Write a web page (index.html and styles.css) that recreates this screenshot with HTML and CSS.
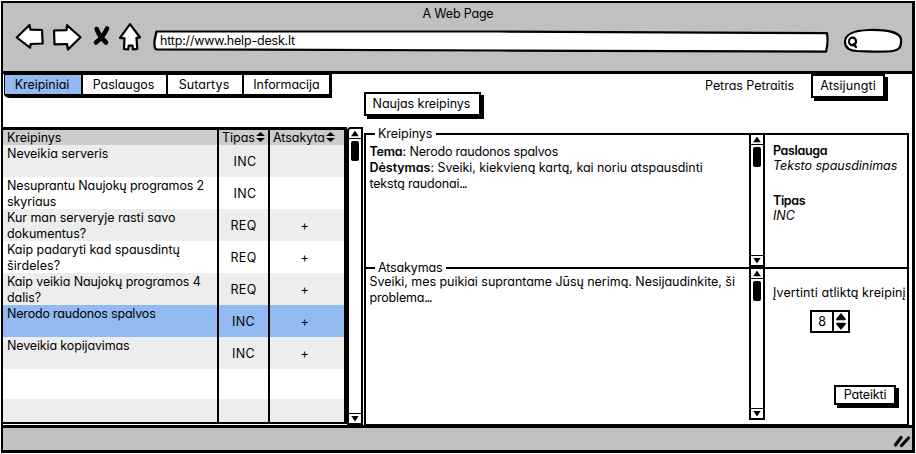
FILE: index.html
```
<!DOCTYPE html>
<html lang="lt">
<head>
<meta charset="utf-8">
<title>A Web Page</title>
<link rel="stylesheet" href="styles.css">
</head>
<body>
<svg class="defs" aria-hidden="true">
  <symbol id="sort" viewBox="0 0 9 10"><path d="M4.500 0 9 4H0zM0 6h9L4.500 10z"/></symbol>
  <symbol id="up" viewBox="0 0 8 6"><path d="M4 0 8 6H0z"/></symbol>
  <symbol id="down" viewBox="0 0 8 6"><path d="M0 0H8L4 6z"/></symbol>
</svg>
<div class="window">
  <header class="chrome">
    <h1 class="title n4">A Web Page</h1>
    <div class="toolbar">
      <svg class="nav" viewBox="15 22 128 32" aria-hidden="true">
        <path class="ink" d="M16.700 37.500 29.500 25l1 4.700 11.500.3.700 13.500-12 .5-.7 3.700zM54 30.500l12.500-.3.500-5 13.500 12L68 49.500l-1-5.500-12.500.3z"/>
        <path class="cross" d="M96.700 29Q98.500 35 106 42.500M107 28.500Q104 36 96 42.500"/>
        <path class="ink" d="M130 24.200 140 37.500l-3.500.3.800 11-4.300.7-.5-4-3.800.2-.5 3.600-4.200-.3.500-10.700-4.500-.5z"/>
      </svg>
      <div class="address">
        <svg class="shape" viewBox="153 29 677 24" aria-hidden="true"><path class="ink" d="M156.500 31.500 500 31.500 827 33.200q1.500 9-1 18.500L500 50.500 156 49.300q-2-2-1.500-8.500z"/></svg>
        <span class="url n4">http://www.help-desk.lt</span>
      </div>
      <svg class="search" viewBox="842 26 62 30" aria-hidden="true">
        <path class="ink" d="M845 42c0-8 8-11.500 24-12 18-.5 31 2.500 32 9 .8 9-2 12-14 12.500-12 .5-20-.3-30-.5-8-.5-12-4-12-9z"/>
        <path class="lens" d="M856 41.500a3.500 3.800 0 1 1-7 0 3.500 3.800 0 1 1 7 0zM853.500 44l2.500 3"/>
      </svg>
    </div>
  </header>

  <section class="topbar">
    <nav class="tabs">
      <a class="tab tab-a active">Kreipiniai</a>
      <a class="tab tab-b">Paslaugos</a>
      <a class="tab tab-c p1">Sutartys</a>
      <a class="tab tab-d">Informacija</a>
    </nav>
    <button class="btn new">Naujas kreipinys</button>
    <span class="user">Petras Petraitis</span>
    <button class="btn logout p1">Atsijungti</button>
  </section>

  <main class="main">
    <div class="list">
      <div class="row head">
        <div>Kreipinys</div>
        <div class="hc">Tipas<svg class="sort"><use href="#sort"/></svg></div>
        <div class="hc">Atsakyta<svg class="sort"><use href="#sort"/></svg></div>
      </div>
      <div class="row odd"><div>Neveikia serveris</div><div class="c">INC</div><div class="c"></div></div>
      <div class="row"><div><span class="n3">Nesuprantu Naujokų programos 2</span><br><span class="n2">skyriaus</span></div><div class="c">INC</div><div class="c"></div></div>
      <div class="row odd"><div>Kur man serveryje rasti savo<br>dokumentus?</div><div class="c req">REQ</div><div class="c">+</div></div>
      <div class="row"><div>Kaip padaryti kad spausdintų<br><span class="p1">širdeles?</span></div><div class="c req">REQ</div><div class="c">+</div></div>
      <div class="row odd"><div><span class="n2">Kaip veikia Naujokų programos 4</span><br>dalis?</div><div class="c req">REQ</div><div class="c">+</div></div>
      <div class="row selected"><div class="n4">Nerodo raudonos spalvos</div><div class="c inc">INC</div><div class="c">+</div></div>
      <div class="row odd"><div class="n3">Neveikia kopijavimas</div><div class="c inc">INC</div><div class="c">+</div></div>
      <div class="row short"><div></div><div></div><div></div></div>
      <div class="row odd last"><div></div><div></div><div></div></div>
    </div>
    <div class="scroll list-scroll">
      <svg class="cap"><use href="#up"/></svg><i class="thumb"></i><svg class="cap end"><use href="#down"/></svg>
    </div>

    <div class="panel">
      <section class="group request">
        <h2 class="legend">Kreipinys</h2>
        <div class="cols">
          <p class="text"><b class="n4">Tema</b>: <span class="n4">Nerodo raudonos spalvos</span><br><b>Dėstymas</b>: Sveiki, kiekvieną kartą, kai noriu atspausdinti<br><span class="n4">tekstą raudonai<span class="dots">...</span></span></p>
          <div class="scroll"><svg class="cap"><use href="#up"/></svg><i class="thumb"></i><svg class="cap end"><use href="#down"/></svg></div>
          <dl class="side">
            <dt>Paslauga</dt><dd>Teksto spausdinimas</dd>
            <dt>Tipas</dt><dd>INC</dd>
          </dl>
        </div>
      </section>
      <section class="group answer">
        <h2 class="legend n3">Atsakymas</h2>
        <div class="cols">
          <p class="text">Sveiki, mes puikiai suprantame Jūsų nerimą. Nesijaudinkite, ši<br><span class="n4">problema<span class="dots">...</span></span></p>
          <div class="scroll"><svg class="cap"><use href="#up"/></svg><i class="thumb"></i><svg class="cap end"><use href="#down"/></svg></div>
          <div class="rate">
            <span class="p1">Įvertinti atliktą kreipinį</span>
            <div class="spinner"><span>8</span><svg viewBox="0 0 10 15"><path d="M5 0 9.500 5.500 8.500 6.500h-7L.5 5.500zM1.500 8.500h7l1 1L5 15 .5 9.500z"/></svg></div>
            <button class="btn submit n3">Pateikti</button>
          </div>
        </div>
      </section>
    </div>
  </main>

  <footer class="status">
    <svg viewBox="0 0 18 15" aria-hidden="true"><path d="M2.500 12 8 4.500M8.500 12.500 15.500 5"/></svg>
  </footer>
</div>
</body>
</html>
```
FILE: styles.css
```
* { box-sizing: border-box; margin: 0; padding: 0; }

body {
  width: 916px;
  height: 454px;
  overflow: hidden;
  background: #fff;
  color: #000;
  font: 12.5px/16px Inter, "Open Sans", sans-serif;
  font-feature-settings: "cv11";
  letter-spacing: -0.04px;
  white-space: nowrap;
}

h1, h2, button { font: inherit; font-feature-settings: inherit; letter-spacing: -0.04px; }
b, dt { font-weight: 600; }
svg { display: block; flex: none; }
.defs { display: none; }

/* tracking steps */
.n2 { letter-spacing: -0.1px; }
.n3 { letter-spacing: -0.14px; }
.n4 { letter-spacing: -0.19px; }
.p1 { letter-spacing: 0.1px; }
.dots { letter-spacing: -1.2px; }

.window {
  display: flex;
  flex-direction: column;
  width: 914px;
  height: 452px;
  margin: 1px;
  border: solid #000;
  border-width: 2px 3px 3px 2px;
}

.chrome {
  height: 71px;
  flex: none;
  background: #c0c0c0;
  border-bottom: 3px solid #000;
}
.title { height: 19px; padding: 3px 0 0 1px; text-align: center; line-height: 16px; }
.toolbar { display: flex; align-items: flex-start; height: 34px; padding-left: 12px; }
.nav { width: 128px; height: 32px; }
.address { display: grid; width: 677px; height: 24px; margin: 7px 12px 0 10px; }
.address > * { grid-area: 1 / 1; }
.shape { width: 677px; height: 24px; }
.url { padding: 4px 0 0 7px; line-height: 16px; z-index: 1; }
.search { width: 62px; height: 30px; margin-top: 4px; }
.ink { fill: #fff; stroke: #000; stroke-width: 2.2; stroke-linejoin: round; }
.cross { fill: none; stroke: #000; stroke-width: 4.6; stroke-linecap: round; }
.lens { fill: none; stroke: #000; stroke-width: 2.2; stroke-linecap: round; }

.topbar { display: flex; align-items: flex-start; height: 53px; flex: none; }
.tabs {
  display: flex;
  width: 328px;
  height: 24px;
  margin-left: 1px;
  border: solid #000;
  border-width: 1px 3px 4px 1px;
  border-bottom-left-radius: 6px 4px;
}
.tab { height: 19px; padding: 2px 2px 0 0; text-align: center; border-right: 2px solid #000; }
.tab-a { width: 78px; }
.tab-b { width: 85px; }
.tab-c { width: 76px; }
.tab-d { flex: 1; border: 0; padding-right: 0; }
.active { background: #93b9f1; }

.btn {
  background: #fff;
  border: 2px solid #000;
  box-shadow: 3px 3px 0 #000;
  color: #000;
  text-align: center;
}
.new { width: 117px; height: 24px; margin: 18px 0 0 32px; padding-right: 2px; }
.user { margin: 4px 0 0 224px; width: 106px; }
.logout { width: 74px; height: 24px; padding-bottom: 1px; }

.main { display: flex; flex: 1; min-height: 0; }
.list { width: 344px; border: solid #000; border-width: 3px 3px 2px 0; height: 297px; }
.row { display: grid; grid-template-columns: 216px 51px 1fr; height: 32px; }
.row > div { padding: 1px 0 0 4px; border-right: 2px solid #000; }
.row > div:last-child { border-right: 0; }
.row > .c { display: flex; align-items: center; justify-content: center; padding: 1px 5px 0 0; }
.row > .c:nth-child(2) { padding: 1px 0 0 3px; letter-spacing: 0.3px; }
.row > .c.inc { padding-left: 0; }
.row > .c.req { padding-left: 0; }
.head { height: 15px; background: #ccc; }
.row.head > div { padding-top: 0; }
.row > .hc { display: flex; padding-left: 3px; }
.sort { width: 9px; height: 10px; margin: 2px 0 0 1px; }
.odd { background: #ededed; }
.selected { background: #93b9f1; }
.short { height: 30px; }
.last { height: 23px; }

.scroll {
  display: flex;
  flex-direction: column;
  align-items: center;
  width: 16px;
  border: 2px solid #000;
}
.cap { width: 12px; height: 10px; padding: 1.500px 1px; border-bottom: 1.500px solid #000; }
.cap.end { margin-top: auto; border-bottom: 0; border-top: 1.500px solid #000; }
.thumb { width: 8px; height: 20px; margin-top: 2px; background: #000; border-radius: 2px; }
.list-scroll { height: 298px; margin-right: 1px; border-top-left-radius: 4px; }

.panel { width: 545px; padding-top: 6px; }
.group { display: flow-root; height: 134px; border: solid #000; border-width: 0 2px; }
.answer { height: 158px; border-bottom: 1px solid #000; }
.legend { display: flex; align-items: center; height: 16px; margin: -7px 0; }
.legend::before, .legend::after { content: ""; height: 2px; background: #000; }
.legend::before { width: 9px; margin-right: 3px; }
.legend::after { flex: 1; margin-left: 4px; }
.cols { display: flex; height: 132px; }
.text { width: 383px; padding: 9px 0 0 3.500px; }
.answer .text { padding-top: 5px; }
.cols .scroll { border-top: 0; }
.answer .cols .scroll { height: 151px; }
.side { padding: 8px 0 0 8px; }
.side dt { letter-spacing: -0.35px; line-height: 15px; }
.side dd { font-style: italic; line-height: 15px; margin-bottom: 20px; }
.rate { display: flex; flex-direction: column; width: 142px; padding: 16px 0 0 8px; }
.spinner { display: flex; width: 40px; height: 23px; margin: 9px 0 0 37px; border: 2px solid #000; }
.spinner span { width: 22px; text-align: center; line-height: 20px; border-right: 2px solid #000; }
.spinner svg { width: 12px; height: 17px; margin: 1px; }
.submit { width: 62px; height: 24px; margin: 52px 0 0 61px; }

.status {
  display: flex;
  justify-content: flex-end;
  height: 25px;
  flex: none;
  background: #c0c0c0;
  border-top: 3px solid #000;
}
.status svg { width: 18px; height: 15px; margin: 5px 1px 0 0; fill: none; stroke: #000; stroke-width: 3.2; stroke-linecap: round; }
```
